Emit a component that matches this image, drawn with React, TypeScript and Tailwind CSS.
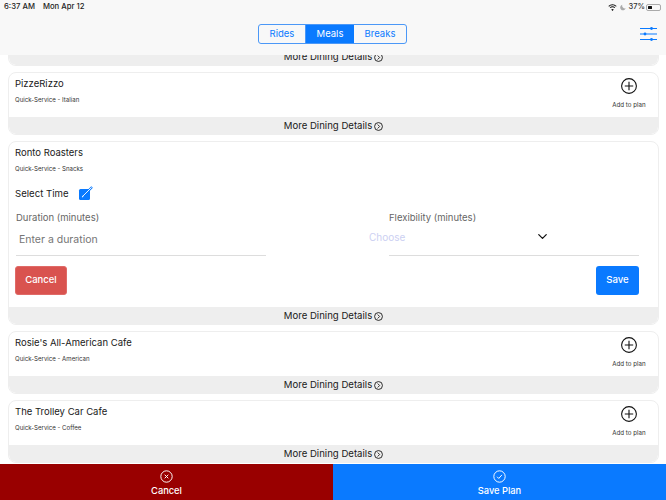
import { ChevronDown } from "lucide-react";

const FONT = "font-['Inter','Liberation_Sans',sans-serif]";

function CircleArrow() {
  return (
    <svg viewBox="0 0 16 16" className="w-[9px] h-[9px] ml-[2px]" fill="none" stroke="currentColor" strokeWidth="1.6">
      <circle cx="8" cy="8" r="7" />
      <path d="M6.5 4.5 10 8l-3.5 3.5" />
    </svg>
  );
}

function MoreDetails() {
  return (
    <div className="h-[17px] shrink-0 bg-[#eeeeee] flex items-center justify-center pt-[1px] text-[9.6px] text-[#1a1a1a] rounded-b-[7px]">
      <span>More Dining Details</span>
      <CircleArrow />
    </div>
  );
}

function AddToPlan() {
  return (
    <div className="flex flex-col items-center w-[40px] mt-[5px] mr-[9px]">
      <svg viewBox="0 0 16 16" className="w-[16px] h-[16px]" fill="none" stroke="#111111" strokeWidth="1.1">
        <circle cx="8" cy="8" r="7.4" />
        <path d="M8 3.8v8.4M3.8 8h8.4" />
      </svg>
      <span className="text-[6.2px] text-[#333333] mt-[6px] whitespace-nowrap">Add to plan</span>
    </div>
  );
}

function PlaceCard({ name, kind }: { name: string; kind: string }) {
  return (
    <div className="h-[63px] shrink-0 bg-white border border-[#eeeeee] rounded-[8px] flex flex-col overflow-hidden">
      <div className="flex-1 flex justify-between pl-[6px]">
        <div>
          <div className="text-[9.5px] leading-[12px] mt-[5px] text-[#1a1a1a]">{name}</div>
          <div className="text-[6.1px] leading-[8px] mt-[6px] text-[#333333]">{kind}</div>
        </div>
        <AddToPlan />
      </div>
      <MoreDetails />
    </div>
  );
}

function TimeCard() {
  return (
    <div className="h-[184px] shrink-0 bg-white border border-[#eeeeee] rounded-[8px] flex flex-col overflow-hidden">
      <div className="flex-1 pl-[6px] pr-[19px]">
        <div className="text-[9.5px] leading-[12px] mt-[5px] text-[#1a1a1a]">Ronto Roasters</div>
        <div className="text-[6.1px] leading-[8px] mt-[6px] text-[#333333]">Quick-Service - Snacks</div>
        <div className="flex items-center mt-[14px] h-[14px]">
          <span className="text-[9.6px] text-[#1a1a1a]">Select Time</span>
          <div className="relative w-[11px] h-[11px] ml-[10px] bg-[#0a7aff] rounded-[1.5px]">
            <svg viewBox="0 0 14 14" className="absolute -top-[3px] left-[1px] w-[13px] h-[13px]" fill="none">
              <path d="M2.500 11.500 13 1" stroke="#0a7aff" strokeWidth="2.400" />
              <path d="M3 11 12.500 1.500" stroke="white" strokeWidth="1" />
              <path d="M2 12.500 2.600 10.200l1.300 1.300z" fill="white" />
            </svg>
          </div>
        </div>
        <div className="flex justify-between mt-[11px]">
          <div className="w-[250px] ml-[1px] h-[44px] border-b border-[#dddddd]">
            <div className="text-[9.5px] leading-[12px] text-[#666666]">Duration (minutes)</div>
            <div className="text-[10.5px] leading-[14px] text-[#757575] mt-[9px] ml-[3px]">Enter a duration</div>
          </div>
          <div className="relative w-[250px] h-[44px] border-b border-[#dddddd]">
            <div className="text-[9.5px] leading-[12px] text-[#666666]">Flexibility (minutes)</div>
            <div className="absolute left-[-20px] top-[18px] text-[10px] leading-[14px] text-[#ccd0f2]">Choose</div>
            <ChevronDown className="absolute left-[146px] top-[17px] w-[15px] h-[15px] text-[#111111]" strokeWidth={2} />
          </div>
        </div>
        <div className="flex justify-between mt-[10px]">
          <button className="w-[52px] h-[29px] bg-[#d9534f] border border-[#e06a67] rounded-[3px] text-white text-[9.5px] font-medium">Cancel</button>
          <button className="w-[43px] h-[29px] bg-[#0a7aff] rounded-[3px] text-white text-[9.6px] font-medium">Save</button>
        </div>
      </div>
      <MoreDetails />
    </div>
  );
}

export default function App() {
  return (
    <div className={`w-[666px] h-[500px] flex flex-col overflow-hidden bg-white ${FONT}`}>
      {/* Header */}
      <div className="h-[55px] shrink-0 bg-[#f8f8f8] relative z-10 px-[4px]">
        <div className="flex justify-between items-center h-[13px] mt-0 pt-[1px]">
          <div className="flex gap-[8px] text-[7.7px] font-medium text-[#222222]">
            <span>6:37 AM</span>
            <span>Mon Apr 12</span>
          </div>
          <div className="flex items-center text-[7.5px] font-medium text-[#333333]">
            <svg viewBox="0 0 16 12" className="w-[9px] h-[7px]" fill="#111111">
              <path d="M8 2.2c2.4 0 4.500 1 6.100 2.500l1.200-1.300A10.800 10.800 0 0 0 8 .4 10.800 10.800 0 0 0 .7 3.400l1.200 1.300A8.900 8.900 0 0 1 8 2.200zm0 3.500c1.400 0 2.600.5 3.600 1.400l1.200-1.300A7.200 7.200 0 0 0 8 3.900a7.200 7.200 0 0 0-4.800 1.900l1.200 1.300C5.400 6.200 6.600 5.700 8 5.700zM8 12l2.300-2.500A3.400 3.400 0 0 0 8 8.600a3.400 3.400 0 0 0-2.300.9z" />
            </svg>
            <svg viewBox="0 0 10 10" className="w-[6px] h-[7px] ml-[3px]" fill="#aaaaaa">
              <path d="M3.800.5A4.700 4.700 0 0 0 9.500 6.400 4.700 4.700 0 1 1 3.800.5z" />
            </svg>
            <span className="ml-[3px]">37%</span>
            <div className="relative w-[15px] h-[7px] ml-[1px] mr-[1px] border border-[#aaaaaa] rounded-[2px] p-[1px]">
              <div className="w-[4px] h-full bg-[#111111] rounded-[0.5px]" />
            </div>
          </div>
        </div>
        <div className="flex justify-center mt-[11px] ml-[-1px]">
          <div className="flex h-[20px] border border-[#4b98f7] rounded-[3px] overflow-hidden text-[9.5px] text-[#0a7aff]">
            <div className="w-[47px] flex items-center justify-center border-r border-[#4b98f7]">Rides</div>
            <div className="w-[48px] flex items-center justify-center bg-[#0a7aff] text-white">Meals</div>
            <div className="w-[52px] flex items-center justify-center">Breaks</div>
          </div>
        </div>
        <svg viewBox="0 0 17 14" className="absolute right-[9px] top-[27px] w-[17px] h-[14px]" fill="#0a7aff" stroke="#0a7aff">
          <path d="M0 1.500h17M0 7h17M0 12.500h17" strokeWidth="1" />
          <circle cx="11.500" cy="1.500" r="1.400" strokeWidth="0" />
          <circle cx="5" cy="7" r="1.400" strokeWidth="0" />
          <circle cx="11.500" cy="12.500" r="1.400" strokeWidth="0" />
        </svg>
      </div>

      {/* List */}
      <div className="flex-1 min-h-0 overflow-hidden pl-[8px] pr-[7px] flex flex-col gap-[6px]">
        <div className="h-[11px] shrink-0 flex flex-col justify-end overflow-hidden border border-t-0 border-[#eeeeee] rounded-b-[8px]">
          <MoreDetails />
        </div>
        <PlaceCard name="PizzeRizzo" kind="Quick-Service - Italian" />
        <TimeCard />
        <PlaceCard name="Rosie's All-American Cafe" kind="Quick-Service - American" />
        <PlaceCard name="The Trolley Car Cafe" kind="Quick-Service - Coffee" />
      </div>

      {/* Bottom bar */}
      <div className="h-[36px] shrink-0 flex text-white text-[9.3px] font-medium">
        <div className="w-[333px] bg-[#990000] flex flex-col items-center pt-[6px]">
          <svg viewBox="0 0 16 16" className="w-[13px] h-[13px]" fill="none" stroke="white" strokeWidth="1.2">
            <circle cx="8" cy="8" r="7" />
            <path d="m5.800 5.800 4.400 4.400m0-4.400-4.400 4.400" />
          </svg>
          <span className="leading-[12px] mt-[2px]">Cancel</span>
        </div>
        <div className="flex-1 bg-[#0a7aff] flex flex-col items-center pt-[6px]">
          <svg viewBox="0 0 16 16" className="w-[13px] h-[13px]" fill="none" stroke="white" strokeWidth="1.2">
            <circle cx="8" cy="8" r="7" />
            <path d="m5 8.300 2.100 2.100L11 6" />
          </svg>
          <span className="leading-[12px] mt-[2px]">Save Plan</span>
        </div>
      </div>
    </div>
  );
}
